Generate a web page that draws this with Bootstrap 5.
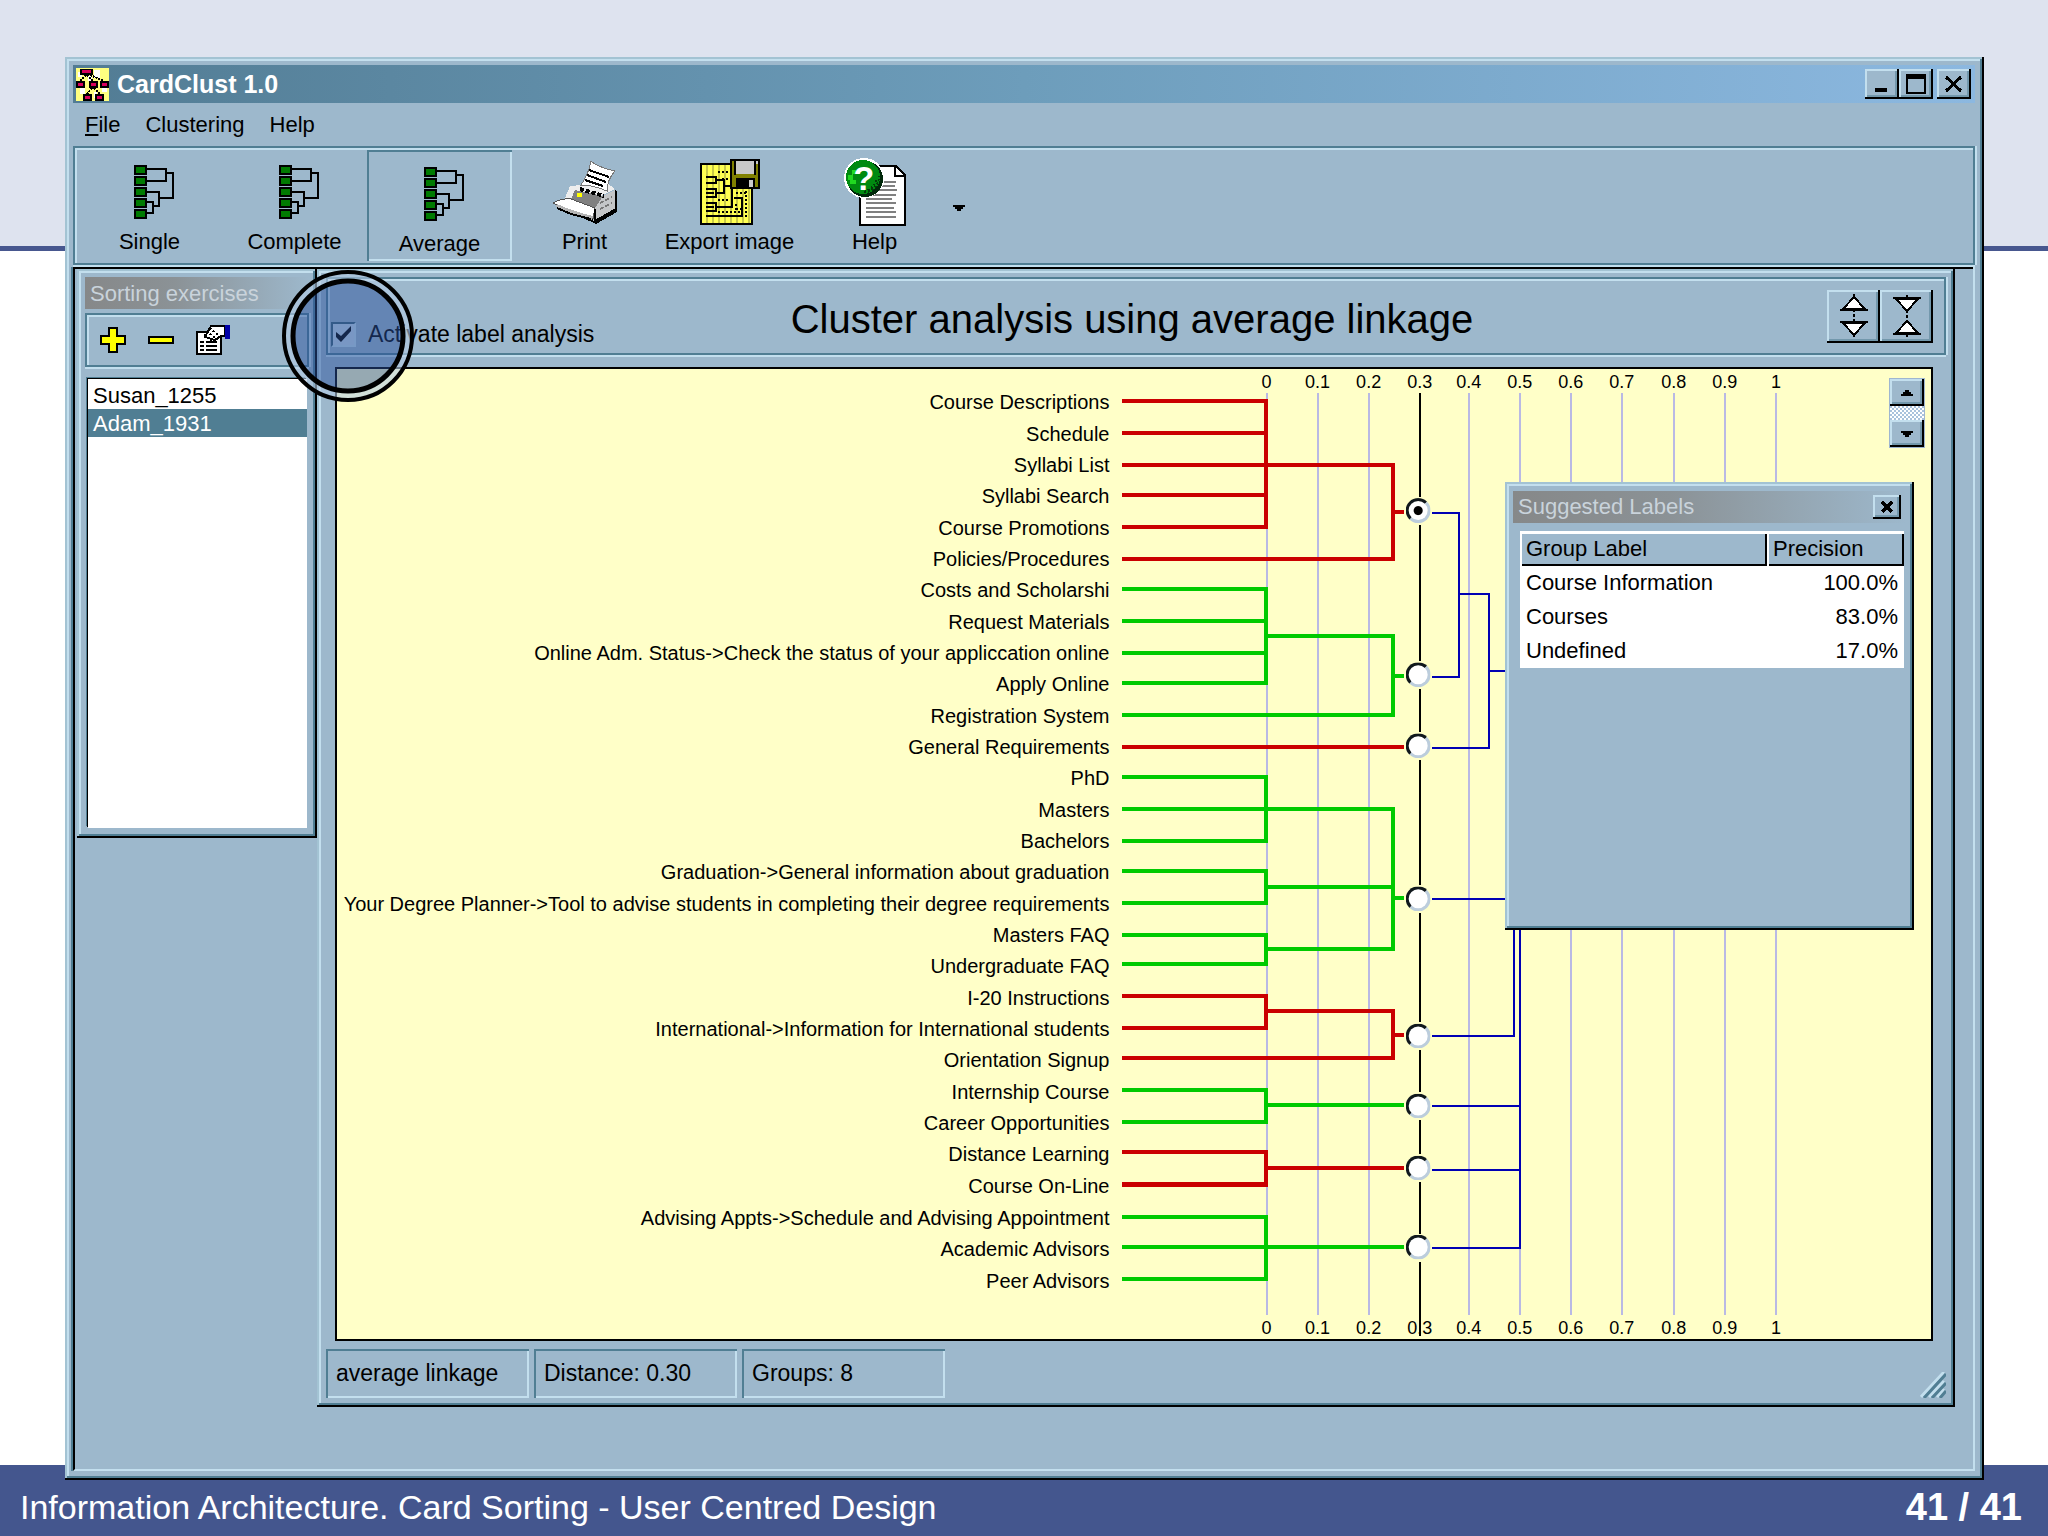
<!DOCTYPE html>
<html lang="en">
<head>
<meta charset="utf-8">
<meta name="viewport" content="width=device-width, initial-scale=1">
<title>CardClust 1.0</title>
<link href="https://cdn.jsdelivr.net/npm/bootstrap@5.3.0/dist/css/bootstrap.min.css" rel="stylesheet">
<style>
:root{--face:#9db8cc;--hi:#c3dfee;--lo:#507e93}
body{font-family:"Liberation Sans",Arial,sans-serif;font-size:22px;line-height:28px;color:#000;
  background:linear-gradient(#dee3ef 246px,#47578f 246px,#47578f 251px,#fff 251px)}
button{font:inherit;color:inherit}
svg{display:block}
.pix{shape-rendering:crispEdges}
.raised{background:var(--face);box-shadow:inset -2px -2px #000,inset 2px 2px #a3c3d3,inset -4px -4px var(--lo),inset 4px 4px var(--hi)}
.bevel-btn{background:var(--face);border:0;padding:0;border-radius:0;box-shadow:inset -2px -2px #000,inset 2px 2px var(--hi),inset -4px -4px #7398ac;display:flex;align-items:center;justify-content:center}
.etched{box-shadow:inset 0 0 0 2px var(--lo),inset 4px 4px var(--hi),0 2px var(--hi),2px 0 var(--hi)}
.app-window{margin:57px 64px -15px 65px;padding:8px 9px 9px 8px;z-index:2}
.caption-bar{height:38px;padding:0 4px 0 3px;gap:8px;background:linear-gradient(90deg,#527c94,#6d9dbb 50%,#8cb8e0);color:#fff;font-weight:700;font-size:25px}
.caption-bar .bevel-btn{width:34px;height:30px}
.menu-row{height:43px;padding:0 12px;gap:25px}
.menu-row a{color:#000;text-decoration:none;padding:0}
.tool-row{height:119px;padding:4px}
.tool-btn{width:145px;background:none;border:0;padding:6px 0 0;display:flex;flex-direction:column;align-items:center}
.tool-btn .pic{height:72px;display:flex;align-items:center}
.tool-btn.pressed{padding-top:8px;box-shadow:inset 2px 2px var(--lo),inset -2px -2px var(--hi)}
.tool-more{width:24px;background:none;border:0;padding:4px 0 0}
.workspace{border-left:2px solid #000;border-right:2px solid var(--hi);border-bottom:2px solid var(--hi);margin:2px 0 0;padding:2px 18px 61px 2px;box-shadow:inset 0 2px #000,-2px 0 var(--lo)}
.side-win{width:240px;padding:8px;padding-bottom:10px;flex:none}
.dim-title{height:32px;padding:2px 5px 0;color:#c9d3db;background:linear-gradient(90deg,#868889,#8b9296 40%,var(--face));display:flex;align-items:center;white-space:nowrap}
.side-tools{height:54px;margin-top:4px;padding:0 15px;gap:22px}
.side-tools button{background:none;border:0;padding:0}
.name-list{margin:12px 2px 0 3px;height:449px;background:#fff;border:0;box-shadow:-1px -1px #000,-2px -2px var(--lo);border-radius:0;padding-top:2px}
.name-list button{border:0;padding:1px 5px 0;text-align:left;line-height:27px;background:#fff;width:100%;display:block}
.name-list button.chosen{background:var(--lo);color:#fff}
.main-win{flex:1 1 0;min-width:0;padding:8px 9px 9px}
.head-row{height:78px;display:grid;grid-template-columns:1fr auto 1fr;align-items:center;padding:0 13px 0 5px}
.head-row h1{font-size:40px;line-height:48px;margin:6px 0 0;font-weight:400}
.head-row .bevel-btn{width:53px;height:53px}
.label-check{font-size:23px;gap:12px;padding-top:36px;z-index:3}
.label-check input{appearance:none;width:25px;height:25px;margin:0;background:#c7dcec;border:2px solid #3d6478;border-right-color:var(--hi);border-bottom-color:var(--hi)}
.label-check input:checked{background:#c7dcec url("data:image/svg+xml,%3Csvg xmlns='http://www.w3.org/2000/svg' viewBox='0 0 21 21'%3E%3Cpath d='M3 8v5l5 5L18 7V2L8 12z' fill='%23000'/%3E%3C/svg%3E")}
.spot{left:-49px;top:-14px;width:132px;height:132px;pointer-events:none}
.chart{margin:12px 13px 0 9px;border:2px solid #000;background:#ffffc8}
.chart>svg{width:100%;height:auto}
.node{appearance:none;display:block;width:25px;height:25px;margin:0;border-radius:50%;background:#fff;border:3px solid #10181c;border-right-color:#bccddc;border-bottom-color:#bccddc}
.node:checked{background:radial-gradient(circle,#000 4px,#fff 5px)}
.labels-win{right:17px;top:113px;width:409px;height:448px;padding:9px 8px;background:var(--face)}
.labels-win .bevel-btn{width:28px;height:24px}
.labels-win .dim-title{justify-content:space-between;padding:0 5px}
.labels-win table{width:384px;margin:8px 0 0 7px;background:#fff;table-layout:fixed}
.labels-win th{font-weight:400;height:35px;padding:0 6px;background:var(--face);box-shadow:inset 0 3px #fff,inset 2px 0 #fff,inset -2px -2px #000;vertical-align:middle}
.labels-win td{height:34px;padding:0 6px;vertical-align:middle}
.spinner-box{right:6px;top:9px;width:36px;height:70px;background:#9fb6d0;padding:1px}
.spinner-box .bevel-btn{height:27px;width:34px}
.dither{height:14px;background:repeating-conic-gradient(#fff 0 25%,#a9c2dc 0 50%) 0 0/4px 4px}
.status-row{margin-top:8px;height:49px;gap:5px;font-size:23px}
.status-cell{width:203px;height:49px;padding:0 10px;display:flex;align-items:center;box-shadow:inset 2px 2px var(--lo),inset -2px -2px var(--hi)}
.slide-foot{height:71px;background:#44568e;color:#fff;font-size:34px;padding:12px 26px 0 20px}
.slide-foot b{font-size:38px}
</style>
<script src="https://cdn.jsdelivr.net/npm/bootstrap@5.3.0/dist/js/bootstrap.bundle.min.js"></script>
</head>
<body>
<div class="min-vh-100 d-flex flex-column">
<main class="app-window raised flex-grow-1 d-flex flex-column position-relative">
  <header class="caption-bar d-flex align-items-center">
    <svg class="pix" width="33" height="33" viewBox="0 0 33 33"><path fill="#ffff80" d="M0 0h33v33H0z"/><path fill="#fff" d="M2 4h4v5H2zM18 2h6v8h-6zM4 20h5v6H4zM26 18h5v6h-5zM12 8h4v5h-4zM18 24h3v6h-3z"/><path fill="#000" d="M4 1h13v6H4zM0 13h9v7H0zM13 13h9v7h-9zM24 13h9v7h-9zM7 26h9v7H7zM19 26h9v7h-9z"/><path fill="#d8005c" d="M6 2h9v3H6zM2 15h5v3H2zM15 15h5v3h-5zM26 15h5v3h-5zM9 28h5v3H9zM21 28h5v3h-5z"/><path fill="none" stroke="#000" stroke-width="2" stroke-dasharray="2 1" d="M10 7 4 13M11 7l6 6M14 7l14 6M16 20l-5 6M18 20l6 6"/></svg>
    <span class="flex-grow-1">CardClust 1.0</span>
    <div class="d-flex">
      <button class="bevel-btn" aria-label="Minimize"><svg class="pix" width="24" height="20"><path d="M5 14h12v4H5z"/></svg></button>
      <button class="bevel-btn me-1" aria-label="Maximize"><svg class="pix" width="24" height="22"><path d="M2 1h20v20H2zM4 6v13h16V6z" fill-rule="evenodd"/></svg></button>
      <button class="bevel-btn" aria-label="Close"><svg class="pix" width="20" height="20" fill="none" stroke="#000" stroke-width="3"><path d="m2 3 15 14M17 3 2 17"/></svg></button>
    </div>
  </header>
  <nav class="menu-row d-flex align-items-center" aria-label="Main menu">
    <a href="#"><u>F</u>ile</a><a href="#">Clustering</a><a href="#">Help</a>
  </nav>
  <svg width="0" height="0" class="position-absolute" aria-hidden="true"><symbol id="tree" viewBox="0 0 40 54"><path fill="#000" d="M0 0h13v10H0zM0 11h13v10H0zM0 22h13v10H0zM0 33h13v10H0zM0 44h13v10H0z"/><path fill="#007a00" d="M2 2h9v6H2zM2 13h9v6H2zM2 24h9v6H2zM2 35h9v6H2zM2 46h9v6H2z"/><path fill="none" stroke="#000" stroke-width="2" d="M13 4h19v12H13M32 8h7v25H25M13 27h12v14h-6M13 37h6v11h-6"/></symbol></svg>
  <div class="tool-row etched d-flex align-items-stretch">
    <button class="tool-btn"><span class="pic"><svg class="pix ms-2" width="40" height="54"><use href="#tree"/></svg></span>Single</button>
    <button class="tool-btn"><span class="pic"><svg class="pix ms-2" width="40" height="54"><use href="#tree"/></svg></span>Complete</button>
    <button class="tool-btn pressed" aria-pressed="true"><span class="pic"><svg class="pix ms-2" width="40" height="54"><use href="#tree"/></svg></span>Average</button>
    <button class="tool-btn"><span class="pic"><svg class="pix" width="64" height="64" viewBox="0 0 64 64">
      <path fill="#000" d="m62 30 2 2v20L43 64 30 58 16 54l20 0z"/><path fill="#c4c6c8" d="m62 30-16 8-6 12v11l22-11z"/><path fill="#eee" d="M17 26 12 38l28 12 8-14 14-7-8-6z"/><path fill="#808080" d="m22 30 28 6-8 12-24-9z"/><path fill="#fff" stroke="#777" d="M38 1q6 6 24 10-8 9-8 20-14-6-26-6 8-12 10-24z"/><path stroke="#000" stroke-width="2" fill="none" d="m36 10 20 7M34 15l19 7M32 20l18 6"/><path fill="none" stroke="#000" stroke-width="4" stroke-dasharray="4 2" d="m27 29 24 7"/><path fill="#fff" stroke="#555" d="M0 43q9-5 18-4l24 9-2 11Q18 52 0 43z"/><path fill="#b5b5b5" d="M4 44q18 8 36 12l-1 4Q18 54 2 46z"/><path fill="none" stroke="#000" stroke-width="2" d="m4 48 14 6 20 5M42 49v12l21-12V31"/><path stroke="#777" stroke-width="2" stroke-dasharray="4 2" fill="none" d="m47 43 12-6M47 49l12-6"/><path fill="#ff0" d="M24 33h5v4h-5z"/></svg></span>Print</button>
    <button class="tool-btn"><span class="pic"><svg class="pix" width="60" height="66" viewBox="0 0 60 66">
      <path d="M0 4h53v62H0z"/><path fill="#ffff52" d="M2 6h49v58H2z"/><path stroke="#c8c848" stroke-width="2" d="M7 6v58M13 6v58M19 6v58M25 6v58M31 6v58M37 6v58M43 6v58M49 6v58"/><path fill="none" stroke="#000" stroke-width="2" d="M6 18h10v6H6M6 30h10v8H6M6 44h10v8H6M6 57h36V39h-8M16 21h8v13h-8M24 27h8v21H16M6 48h8M6 34h8"/><path stroke="#000" stroke-width="2" stroke-dasharray="2 2" d="M18 13h12M18 41h12M18 53h24M36 34h12M36 45v8M46 32v26M36 50h6M22 20h8"/><path d="M30 0h30v30H30z"/><path fill="#808000" d="M32 2h26v26H32z"/><path fill="#c8c8c8" d="M36 2h18v13H36zM56 2h2v3h-2z"/><path d="M36 19h19v11H36zM34 2h2v14h-2zM54 2h2v14h-2z"/><path fill="#ccc" d="M49 21h4v7h-4z"/></svg></span>Export image</button>
    <button class="tool-btn"><span class="pic"><svg class="pix" width="62" height="68" viewBox="0 0 62 68">
      <path d="M15 7h37l10 10v51H15z"/><path fill="#fff" d="M17 9h33v10h10v47H17z"/><path fill="#fff" d="m52 10 7 7h-7z"/><path stroke="#808080" stroke-width="2" d="M40 24h12M38 28h13M34 32h19M22 37h30M22 41h26M22 45h30M22 50h28M22 54h30M22 59h30"/><circle cx="20" cy="20" r="20" fill="#fff"/><circle cx="21" cy="21" r="18" fill="#00280a"/><circle cx="19" cy="19" r="17" fill="#008a10"/><path fill="#20d820" d="M4 17h4v-5h4v4h-3v6h3v4H6v-4H4z"/><path fill="none" stroke="#003c08" stroke-width="2" stroke-dasharray="2 2" d="M24 34q11-5 11-16M20 34q10-3 13-14"/><text x="20" y="32" text-anchor="middle" font-size="34" font-weight="700" fill="#fff">?</text></svg></span>Help</button>
    <button class="tool-more" aria-label="More tools"><svg class="pix mx-auto" width="12" height="6"><path d="M0 0h12v2h-2v2H8v2H4V4H2V2H0z"/></svg></button>
  </div>

  <div class="workspace flex-grow-1 d-flex align-items-start">
    <section class="side-win raised">
      <div class="dim-title">Sorting exercises</div>
      <div class="side-tools etched d-flex align-items-center">
        <button aria-label="Add"><svg class="pix" width="26" height="26"><path d="M8 0h10v8h8v10h-8v8H8v-8H0V8h8z"/><path fill="#ff0" d="M10 2h6v8h8v6h-8v8h-6v-8H2v-6h8z"/></svg></button>
        <button aria-label="Remove"><svg class="pix" width="26" height="26"><path d="M0 9h26v8H0z"/><path fill="#ff0" d="M2 11h22v4H2z"/></svg></button>
        <button aria-label="Properties"><svg class="pix" width="34" height="30" viewBox="0 0 34 30"><path d="M0 6h26v24H0z"/><path fill="#fff" d="M2 8h22v20H2z"/><path fill="#fff" stroke="#000" stroke-width="2" d="M9 12 15 1h14v10h-4l-6 4z"/><path d="M4 16h4v2H4zM4 20h4v2H4zM4 24h4v2H4zM10 16h11v2H10zM10 20h11v2H10zM10 24h11v2H10z"/><path fill="none" stroke="#000" stroke-width="2" stroke-dasharray="2 2" d="m8 10 8 6M11 6l9 8M14 3l8 7"/><path fill="#0000a8" d="M29 0h5v14h-5z"/></svg></button>
      </div>
      <div class="name-list" role="listbox" aria-label="Sorting exercises">
        <button role="option">Susan_1255</button>
        <button role="option" class="chosen" aria-selected="true">Adam_1931</button>
      </div>
    </section>

    <section class="main-win raised">
      <div class="head-row etched">
        <div class="label-check d-flex align-items-center position-relative">
          <input type="checkbox" id="labelAnalysis" checked><label for="labelAnalysis">Activate label analysis</label>
          <svg class="spot position-absolute" viewBox="0 0 132 132"><circle cx="66" cy="66" r="56" fill="#28509b" fill-opacity=".49"/><circle cx="66" cy="66" r="60" fill="none" stroke="#b4cce4" stroke-opacity=".6" stroke-width="6"/><circle cx="66" cy="66" r="64" fill="none" stroke="#000" stroke-width="4"/><circle cx="66" cy="66" r="55" fill="none" stroke="#000" stroke-width="5"/></svg>
        </div>
        <h1>Cluster analysis using average linkage</h1>
        <div class="d-flex justify-content-end">
          <button class="bevel-btn" aria-label="Expand"><svg class="pix" width="28" height="46" viewBox="0 0 28 46"><path d="M14 1v44" stroke="#000" stroke-width="2" stroke-dasharray="3 2"/><path fill="#fff" stroke="#000" stroke-width="2" d="M14 4 3 16h22zM14 42 3 30h22z"/><path d="M0 16h28v2H0zM0 28h28v2H0z"/></svg></button>
          <button class="bevel-btn" aria-label="Collapse"><svg class="pix" width="28" height="42" viewBox="0 0 28 42"><path d="M14 0v42" stroke="#000" stroke-width="2" stroke-dasharray="3 2"/><path fill="#fff" stroke="#000" stroke-width="2" d="M14 16 3 4h22zM14 26 3 38h22z"/><path d="M0 2h28v2H0zM0 38h28v2H0z"/></svg></button>
        </div>
      </div>

      <div class="chart position-relative">
        <svg viewBox="338 370 1593 969" role="group" aria-label="Dendrogram">
          <g font-size="18" text-anchor="middle">
            <g><text x="1267" y="389">0</text><text x="1318" y="389">0.1</text><text x="1369" y="389">0.2</text><text x="1420" y="389">0.3</text><text x="1469" y="389">0.4</text><text x="1520" y="389">0.5</text><text x="1571" y="389">0.6</text><text x="1622" y="389">0.7</text><text x="1674" y="389">0.8</text><text x="1725" y="389">0.9</text><text x="1776" y="389">1</text></g>
            <g><text x="1267" y="1334">0</text><text x="1318" y="1334">0.1</text><text x="1369" y="1334">0.2</text><text x="1420" y="1334">0.3</text><text x="1469" y="1334">0.4</text><text x="1520" y="1334">0.5</text><text x="1571" y="1334">0.6</text><text x="1622" y="1334">0.7</text><text x="1674" y="1334">0.8</text><text x="1725" y="1334">0.9</text><text x="1776" y="1334">1</text></g>
          </g>
          <g class="pix" fill="none">
            <path stroke="#b9b9e4" stroke-width="2" d="M1267 394v921M1318 394v921M1369 394v921M1469 394v921M1520 394v921M1571 394v921M1622 394v921M1674 394v921M1725 394v921M1776 394v921"/>
            <path stroke="#000" stroke-width="2" d="M1420 394V498M1420 526V662M1420 690V733M1420 761V886M1420 914V1023M1420 1051V1093M1420 1121V1155M1420 1183V1234M1420 1262V1336"/>
            <path stroke="#0000b4" stroke-width="2" d="M1432 514h27v164h-27M1459 595h30v154h-57M1489 672h20M1432 900h80M1432 1037h82V900M1432 1107h88M1432 1171h88M1432 1248h88V900"/>
            <path stroke="#ca0000" stroke-width="4" d="M1123 402h143v126h-143M1123 434h143M1123 496h143M1123 466h270v94h-270M1393 513h11M1123 748h281M1123 997h143v32h-143M1266 1012h127v47h-270M1393 1036h11M1123 1153h143v32h-143M1266 1169h138"/>
            <path stroke="#00ca00" stroke-width="4" d="M1123 590h143v94h-143M1123 622h143M1123 654h143M1266 637h127v79h-270M1393 677h11M1123 778h143v64h-143M1123 810h270v140h-127M1123 872h143v32h-143M1266 888h127M1123 936h143v29h-143M1393 899h11M1123 1091h143v32h-143M1266 1106h138M1123 1217h143v62h-143M1123 1247h281"/>
          </g>
          <g font-size="20" text-anchor="end" id="cardLabels"></g>
          <g id="clusterNodes"></g>
        </svg>
        <div class="spinner-box position-absolute">
          <button class="bevel-btn" aria-label="Scroll up"><svg class="pix" width="12" height="6"><path d="M4 0h4v2h2v2h2v2H0V4h2V2h2z"/></svg></button>
          <div class="dither"></div>
          <button class="bevel-btn" aria-label="Scroll down"><svg class="pix" width="12" height="6"><path d="M0 0h12v2h-2v2H8v2H4V4H2V2H0z"/></svg></button>
        </div>
        <section class="labels-win raised position-absolute">
          <div class="dim-title">Suggested Labels
            <button class="bevel-btn" aria-label="Close"><svg class="pix" width="14" height="12" fill="none" stroke="#000" stroke-width="4"><path d="m2 1 10 10M12 1 2 11"/></svg></button>
          </div>
          <table>
            <colgroup><col style="width:247px"><col></colgroup>
            <thead><tr><th>Group Label</th><th>Precision</th></tr></thead>
            <tbody><tr><td>Course Information</td><td class="text-end">100.0%</td></tr><tr><td>Courses</td><td class="text-end">83.0%</td></tr><tr><td>Undefined</td><td class="text-end">17.0%</td></tr></tbody>
          </table>
        </section>
      </div>

      <div class="status-row d-flex">
        <div class="status-cell">average linkage</div><div class="status-cell">Distance: 0.30</div><div class="status-cell">Groups: 8</div>
        <svg class="ms-auto align-self-end" width="26" height="26" fill="none" stroke-width="3"><path stroke="#c3dfee" d="M1 25 24 0M9 25 24 9M17 25l7-8"/><path stroke="#507e93" d="M4 26 26 2M12 26l14-15M20 26l6-7"/></svg>
      </div>
    </section>
  </div>
</main>
<footer class="slide-foot d-flex justify-content-between align-items-center">
  <span>Information Architecture. Card Sorting - User Centred Design</span><b>41 / 41</b>
</footer>
</div>
<script>
const cards = [["Course Descriptions",402],["Schedule",434],["Syllabi List",465],["Syllabi Search",496],["Course Promotions",528],["Policies/Procedures",559],["Costs and Scholarshi",590],["Request Materials",622],["Online Adm. Status->Check the status of your appliccation online",653],["Apply Online",684],["Registration System",716],["General Requirements",747],["PhD",778],["Masters",810],["Bachelors",841],["Graduation->General information about graduation",872],["Your Degree Planner->Tool to advise students in completing their degree requirements",904],["Masters FAQ",935],["Undergraduate FAQ",966],["I-20 Instructions",998],["International->Information for International students",1029],["Orientation Signup",1060],["Internship Course",1092],["Career Opportunities",1123],["Distance Learning",1154],["Course On-Line",1186],["Advising Appts->Schedule and Advising Appointment",1217],["Academic Advisors",1248],["Peer Advisors",1280]];
const esc = s => s.replace(/>/g, "&gt;");
document.getElementById("cardLabels").innerHTML = cards.map(([t, y]) => `<text x="1110" y="${y + 8}">${esc(t)}</text>`).join("");
const nodes = [511, 675, 746, 899, 1036, 1106, 1168, 1247];
document.getElementById("clusterNodes").innerHTML = nodes.map((y, i) => `<foreignObject x="1406" y="${y - 12}" width="26" height="26"><input class="node" type="radio" name="cluster" aria-label="Cluster ${i + 1}"${i ? "" : " checked"}></foreignObject>`).join("");
</script>
</body>
</html>
